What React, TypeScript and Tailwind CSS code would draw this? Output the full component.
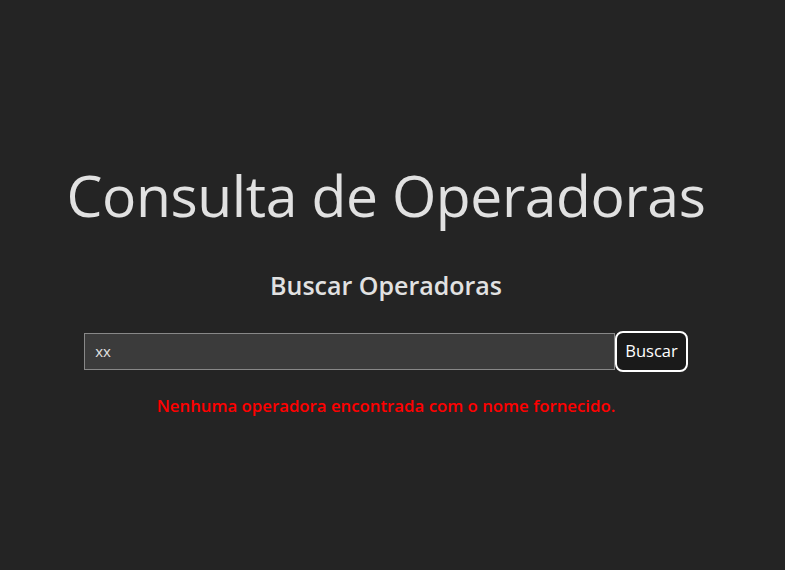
export default function App() {
  return (
    <main
      className="min-h-screen w-full bg-[#242424] text-[#e1e1e1] flex flex-col items-center pr-[13px]"
      style={{ fontFamily: "'Open Sans', 'Noto Sans', sans-serif" }}
    >
      <h1 className="mt-[164px] text-[57px] leading-[1.1] font-normal tracking-[-0.4px]">
        Consulta de Operadoras
      </h1>

      <h2 className="mt-[43px] text-[25px] font-semibold leading-[1.2]">Buscar Operadoras</h2>

      <form className="mt-[31px] flex items-center" onSubmit={(e) => e.preventDefault()}>
        <input
          type="text"
          defaultValue="xx"
          className="w-[531px] h-[37px] bg-[#3b3b3b] border border-[#888] px-[10px] text-[15px] text-[#e1e1e1] outline-none"
        />
        <button
          type="submit"
          className="h-[41px] px-[8px] rounded-[8px] border-2 border-white bg-[#1a1a1a] text-[16.5px] text-white"
        >
          Buscar
        </button>
      </form>

      <p className="mt-[21px] text-[16.8px] font-semibold text-[#ff0000]">
        Nenhuma operadora encontrada com o nome fornecido.
      </p>
    </main>
  );
}
